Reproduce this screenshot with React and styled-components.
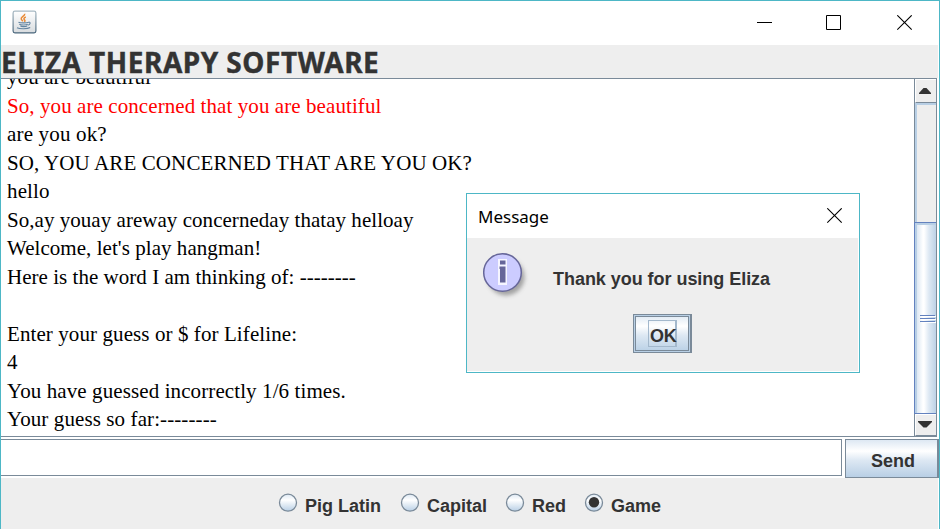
import React from "react";
import styled, { createGlobalStyle } from "styled-components";

const Global = createGlobalStyle`
  * { box-sizing: border-box; }
  html, body { margin: 0; background: #fff; overflow: hidden; }
`;

const Window = styled.div`
  position: relative;
  display: flex;
  flex-direction: column;
  width: 940px;
  height: 529px;
  overflow: hidden;
  background: #fff;
  border: 1px solid #4db7c6;
  border-bottom: 0;
  font-family: "Liberation Sans", Arial, sans-serif;
  color: #333;
`;

const TitleBar = styled.header`
  display: flex;
  justify-content: space-between;
  flex: none;
  height: 44px;
  padding: 9px 26px 0 11px;
`;

const WindowControls = styled.div`
  display: grid;
  grid-template-columns: 69px 71px 16px;
  align-items: start;
  padding-top: 5px;
`;

const Icon = styled.svg`
  display: block;
  flex: none;
`;

const Banner = styled.h1`
  flex: none;
  width: 937px;
  height: 33px;
  margin: 0;
  background: #eee;
  font: bold 28px/34px "Noto Sans", "Open Sans", sans-serif;
  letter-spacing: 0.57px;
  word-spacing: -0.5px;
  -webkit-text-stroke: 0.4px #333;
  white-space: nowrap;
`;

const ScrollPane = styled.section`
  display: flex;
  flex: none;
  width: 936px;
  height: 359px;
  border-top: 1px solid #7a8a99;
  border-bottom: 1px solid #7a8a99;
  border-right: 1px solid #7a8a99;
`;

const Transcript = styled.div`
  flex: 1;
  display: flex;
  flex-direction: column;
  justify-content: flex-end;
  overflow: hidden;
  padding: 0 0 2.25px 6px;
`;

const Line = styled.div`
  flex: none;
  height: 28.5px;
  font: 21px/28.5px "Liberation Serif", "Times New Roman", serif;
  letter-spacing: ${(p) => p.$spacing || 0}px;
  color: ${(p) => (p.$red ? "#f00" : "#000")};
  white-space: pre;
`;

const ScrollBar = styled.div`
  display: flex;
  flex-direction: column;
  width: 22px;
  border-left: 1px solid #7a8a99;
`;

const ArrowButton = styled.div`
  display: flex;
  justify-content: center;
  align-items: center;
  flex: none;
  height: ${(p) => p.$height}px;
  padding: 0 2px 2px 0;
  background: #eee;
  border-top: 1px solid #fff;
  border-left: 1px solid #fff;
  border-bottom: 1px solid #7a8a99;
`;

const Track = styled.div`
  flex: 1;
  background: #eee;
  border-left: 2px solid #b8cfe5;
  border-top: 2px solid #b8cfe5;
`;

const Thumb = styled.div`
  display: flex;
  flex-direction: column;
  justify-content: center;
  align-items: flex-end;
  flex: none;
  height: 192px;
  margin-left: -1px;
  padding: 2px 1px 0 0;
  border: 1px solid #6382bf;
  border-right: 0;
  box-shadow: inset 2px 2px #b8cfe5;
  background: linear-gradient(90deg, #dde8f3 2px, #fff 8px, #fff 9px, #dde8f3 14px, #b8cfe5 22px);
`;

const Grip = styled.div`
  width: 15px;
  height: 1px;
  margin-bottom: 1px;
  background: #6382bf;
  box-shadow: 1px 1px #fff;
  & + & { margin-top: 1px; }
`;

const InputRow = styled.div`
  display: flex;
  flex: none;
  gap: 3px;
  height: 41px;
  padding-top: 2px;
`;

const Field = styled.input`
  width: 841px;
  height: 37px;
  margin: 0;
  padding: 0 4px;
  border: 1px solid #7a8a99;
  border-left: 0;
  border-radius: 0;
  background: #fff;
  outline: 0;
  font: 18px "Liberation Sans", sans-serif;
`;

const metalFill = "linear-gradient(#dde8f3, #fff 30%, #dde8f3 55%, #b8cfe5)";

const SendButton = styled.button`
  width: 94px;
  height: 39px;
  padding: 6px 0 0 3px;
  border: 1px solid #7a8a99;
  border-right-width: 2px;
  border-radius: 0;
  background: ${metalFill};
  color: #333;
  font: bold 18px "Liberation Sans", Arial, sans-serif;
`;

const Modes = styled.div`
  display: flex;
  flex: 1;
  width: 937px;
  padding: 15px 0 0 277px;
  background: #eee;
`;

const Mode = styled.label`
  display: flex;
  gap: 7px;
  width: ${(p) => p.$width}px;
  font: bold 18px/27px "Liberation Sans", Arial, sans-serif;
  white-space: nowrap;
`;

const Dialog = styled.div`
  position: absolute;
  left: 465px;
  top: 192px;
  width: 394px;
  height: 180px;
  display: flex;
  flex-direction: column;
  padding: 0 1px 1px 0;
  border: 1px solid #4db7c6;
  background: #fff;
`;

const DialogTitle = styled.div`
  display: flex;
  justify-content: space-between;
  flex: none;
  height: 44px;
  padding: 14px 15px 0 11px;
  color: #000;
`;

const DialogTitleText = styled.span`
  font: 17px/18px "Noto Sans", "Open Sans", sans-serif;
`;

const DialogBody = styled.div`
  flex: 1;
  display: flex;
  flex-direction: column;
  background: #eee;
`;

const MessageRow = styled.div`
  display: flex;
  gap: 24px;
  height: 76px;
  padding: 13px 0 0 14px;
`;

const MessageText = styled.div`
  padding-top: 16px;
  font: bold 18px/24px "Liberation Sans", Arial, sans-serif;
  letter-spacing: -0.04px;
  white-space: nowrap;
`;

const OkButton = styled.button`
  display: flex;
  width: 59px;
  height: 39px;
  margin-left: 166px;
  padding: 5px 0 0 14px;
  border: 1px solid #7a8a99;
  border-right-width: 2px;
  border-radius: 0;
  box-shadow: inset 0 0 0 1px #b8cfe5, inset 0 0 0 2px #7a8a99;
  background: ${metalFill};
  color: #333;
  font: bold 18px/31px "Liberation Sans", Arial, sans-serif;
`;

const FocusRing = styled.span`
  width: 29px;
  height: 27px;
  padding-left: 1px;
  border: 1px solid #a3b8cc;
  border-right-width: 2px;
  letter-spacing: -0.3px;
  white-space: nowrap;
`;

const CloseIcon = () => (
  <Icon width="16" height="16" viewBox="0 0 16 16">
    <path d="M.3.3l14.400 14.400M14.700.3L.3 14.700" stroke="#000" strokeWidth="1.100" />
  </Icon>
);

const JavaIcon = () => (
  <Icon width="25" height="24" viewBox="0 0 25 24">
    <defs>
      <linearGradient id="tile" x1="0" y1="0" x2="0" y2="1">
        <stop offset="0" stopColor="#fff" />
        <stop offset="1" stopColor="#d8dcdf" />
      </linearGradient>
      <linearGradient id="edge" x1="0" y1="0" x2="0" y2="1">
        <stop offset="0" stopColor="#a9bac4" />
        <stop offset="1" stopColor="#48657b" />
      </linearGradient>
    </defs>
    <rect x="1.1" y="1.1" width="22.8" height="21.8" rx="1.8" fill="url(#tile)" stroke="url(#edge)" strokeWidth="1.2" />
    <path d="M12.7 3.8c.7 2-4 3.200-3.500 5 .2.9 1 1.600 1.700 2.400M13.800 7c-2.600 1-2 2.200-1.200 3 .7.700.3 1.300-.3 1.800" fill="none" stroke="#e98a35" strokeWidth="1.5" />
    <path d="M6.500 12.300c1.500.8 8.500.8 10.200 0M7.400 14c.6 1.300 7.200 1.300 8.300.2M8.400 15.900c1 1 5.500 1 6.800 0M16.500 12.200c2.500-.4 2 2.500-.8 3M5 17.800c2.500 1.300 10.500 1.300 13.200-.2" fill="none" stroke="#6384a0" strokeWidth="1.1" />
  </Icon>
);

const InfoIcon = () => (
  <Icon width="48" height="50" viewBox="0 0 48 50">
    <defs>
      <filter id="soft" x="-20%" y="-20%" width="150%" height="150%">
        <feGaussianBlur stdDeviation="2" />
      </filter>
    </defs>
    <circle cx="25" cy="26" r="18.500" fill="#888" opacity=".75" filter="url(#soft)" />
    <circle cx="21.500" cy="21.500" r="18.800" fill="#ccf" stroke="#669" strokeWidth="1.500" />
    <path d="M17 8h9v26h-9z" fill="#fff" opacity=".8" />
    <path d="M19 9.500h5.500v4H19zM18.500 15.500h6v16h-5.500V18h-.500z" fill="#669" />
  </Icon>
);

const RadioIcon = ({ checked }) => (
  <Icon width="20" height="20" viewBox="0 0 20 20">
    <defs>
      <linearGradient id="radio" x1="0" y1="0" x2="0" y2="1">
        <stop offset="0" stopColor="#dde8f3" />
        <stop offset=".35" stopColor="#fff" />
        <stop offset="1" stopColor="#b8cfe5" />
      </linearGradient>
    </defs>
    <circle cx="10" cy="9.700" r="8.500" fill="url(#radio)" stroke="#7a8a99" strokeWidth="1.300" />
    {checked && <circle cx="10" cy="9.200" r="5.200" fill="#333" />}
  </Icon>
);

const ArrowIcon = ({ down }) => (
  <Icon width="14" height="7" viewBox="0 0 14 7">
    <path d={down ? "M0 0h14v1L8.500 6.500h-3L0 1z" : "M1 7h12V6L8.500 1h-3L1 6z"} fill="#333" />
  </Icon>
);

const lines = [
  { text: "you are beautiful", spacing: 0.1 },
  { text: "So, you are concerned that you are beautiful", red: true, spacing: 0.08 },
  { text: "are you ok?", spacing: 0.17 },
  { text: "SO, YOU ARE CONCERNED THAT ARE YOU OK?", spacing: 0.11 },
  { text: "hello", spacing: 0.15 },
  { text: "So,ay youay areway concerneday thatay helloay", spacing: 0.04 },
  { text: "Welcome, let's play hangman!", spacing: 0.05 },
  { text: "Here is the word I am thinking of: --------", spacing: 0.03 },
  { text: " " },
  { text: "Enter your guess or $ for Lifeline:", spacing: 0.09 },
  { text: "4" },
  { text: "You have guessed incorrectly 1/6 times.", spacing: 0.1 },
  { text: "Your guess so far:--------", spacing: 0.1 },
];

const modes = [
  { label: "Pig Latin", width: 122 },
  { label: "Capital", width: 105 },
  { label: "Red", width: 79 },
  { label: "Game", width: 90, checked: true },
];

export default function App() {
  return (
    <>
      <Global />
      <Window>
        <TitleBar>
          <JavaIcon />
          <WindowControls>
            <Icon width="15" height="16" viewBox="0 0 15 16"><path d="M0 7.500h15" stroke="#000" /></Icon>
            <Icon width="15" height="15" viewBox="0 0 15 15"><path d="M.5.5h14v14H.5z" fill="none" stroke="#000" /></Icon>
            <CloseIcon />
          </WindowControls>
        </TitleBar>
        <Banner>ELIZA THERAPY SOFTWARE</Banner>
        <ScrollPane>
          <Transcript>
            {lines.map((l, i) => (
              <Line key={i} $red={l.red} $spacing={l.spacing}>{l.text}</Line>
            ))}
          </Transcript>
          <ScrollBar>
            <ArrowButton $height={24}><ArrowIcon /></ArrowButton>
            <Track />
            <Thumb><Grip /><Grip /><Grip /></Thumb>
            <ArrowButton $height={22}><ArrowIcon down /></ArrowButton>
          </ScrollBar>
        </ScrollPane>
        <InputRow>
          <Field />
          <SendButton>Send</SendButton>
        </InputRow>
        <Modes>
          {modes.map((m) => (
            <Mode key={m.label} $width={m.width}>
              <RadioIcon checked={m.checked} />
              {m.label}
            </Mode>
          ))}
        </Modes>
        <Dialog>
          <DialogTitle>
            <DialogTitleText>Message</DialogTitleText>
            <CloseIcon />
          </DialogTitle>
          <DialogBody>
            <MessageRow>
              <InfoIcon />
              <MessageText>Thank you for using Eliza</MessageText>
            </MessageRow>
            <OkButton><FocusRing>OK</FocusRing></OkButton>
          </DialogBody>
        </Dialog>
      </Window>
    </>
  );
}
